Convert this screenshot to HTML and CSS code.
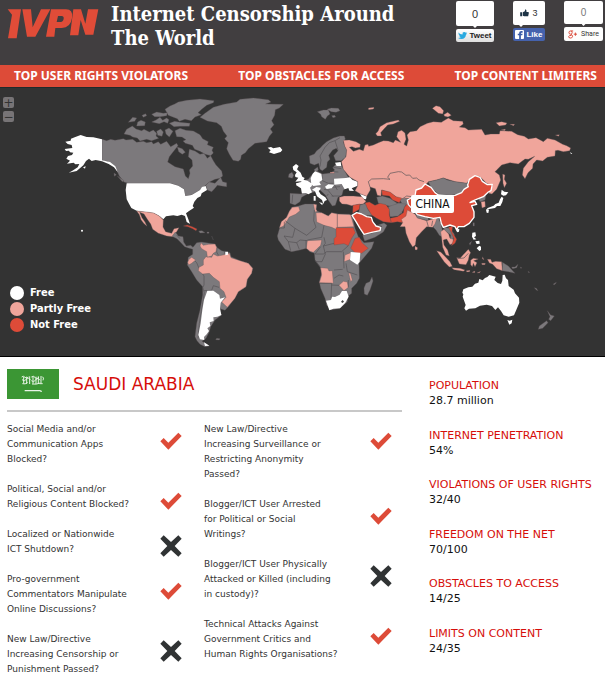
FILE: index.html
```html
<!DOCTYPE html>
<html lang="en">
<head>
<meta charset="utf-8">
<title>Internet Censorship Around The World</title>
<link rel="stylesheet" href="styles.css">
</head>
<body>
<header class="header">
  <a class="logo" href="#" aria-label="IVPN">
    <svg viewBox="0 0 276 96" aria-hidden="true">
      <path d="M2 4H42L29 91H3L15 20Z"/>
      <path d="M46 4H72L77 58L102 4H130L85 86H60Z"/>
      <path fill-rule="evenodd" d="M132 4H177Q199 4 195 30Q191 59 164 60H145L142 86H117ZM153 24L149 42H161Q169 41 170 32Q171 24 164 24Z"/>
      <path d="M199 4H222L235 47L243 4H274L259 80H235L221 36L214 82H189Z"/>
    </svg>
  </a>
  <h1 class="title">Internet Censorship Around The World</h1>
  <div class="social">
    <div class="share">
      <span class="count">0</span>
      <button class="share-btn tweet"><svg viewBox="0 0 26 22" aria-hidden="true"><path fill="#2aa9e0" d="M1 2Q6 8 13 8Q12 1 18 1Q21 1 23 3L26 2L24 6L26 6L23 9Q22 21 10 21Q4 21 0 18Q5 18 8 16Q4 15 3 12H6Q1 10 2 6L4 7Q0 5 1 2Z"/></svg>Tweet</button>
    </div>
    <div class="share">
      <span class="count count-like"><svg viewBox="0 0 26 24" aria-hidden="true"><path fill="#1d3346" d="M0 10H6V22H0ZM8 10L14 7L15 1Q20 1 19 9H25L26 12L24 22H12L8 20Z"/></svg>3</span>
      <button class="share-btn like"><svg viewBox="0 0 26 26" aria-hidden="true"><rect width="26" height="26" rx="3" fill="#fff"/><path fill="#3b5ca8" d="M12 26V15H8V11H12V8Q12 3 18 3H22V8H19Q17 8 17 10V11H22L21 15H17V26Z"/></svg>Like</button>
    </div>
    <div class="share">
      <span class="count count-plus">0</span>
      <button class="share-btn plus"><svg viewBox="0 0 28 26" aria-hidden="true"><g fill="none" stroke="#db4a39" stroke-width="3"><circle cx="8" cy="7" r="5"/><path d="M9 2H16M10 12Q15 16 14 20Q12 25 7 24Q1 23 2 19Q4 15 11 16M18 12H28M23 7V17"/></g></svg>Share</button>
    </div>
  </div>
</header>
<nav class="nav">
  <a href="#">TOP USER RIGHTS VIOLATORS</a>
  <a href="#">TOP OBSTACLES FOR ACCESS</a>
  <a href="#">TOP CONTENT LIMITERS</a>
</nav>
<section class="map">
  <svg class="world" viewBox="0 264 1815 804" role="img" aria-label="World map of internet freedom">
    <!-- North America -->
    <g class="grey" transform="translate(0 270)">
      <path d="M306 148L320 152 332 148 345 151 370 146 378 150 398 148 410 157 430 154 440 158 455 155 460 162 475 155 482 163 500 154 512 170 530 160 534 167 522 182 508 200 503 216 525 230 550 237 556 258 565 266 570 250 568 240 578 228 576 210 565 200 568 178 585 183 600 193 612 190 622 205 632 197 640 212 648 225 665 243 668 258 660 265 645 268 630 275 620 283 612 290 600 300 575 315 556 318 552 298 535 287 510 280 385 280 372 276 358 258 352 245 340 226 322 214 306 212Z"/>
      <path d="M617 286L628 276 645 280 662 262 668 275 680 278 680 290 665 288 652 286 645 295 635 305 622 300Z"/>
      <path d="M380 118L397 108 408 117 425 122 432 118 448 126 460 120 470 130 468 138 476 145 455 152 440 148 420 153 412 144 398 141 390 136 372 132ZM385 97L398 82 410 84 404 94ZM410 108L413 96 423 91 436 96 434 107ZM426 76L437 71 440 77 430 82ZM455 73L470 66 490 70 502 68 500 77 480 80 464 80ZM455 96L468 90 480 82 488 91 500 84 507 89 503 100 492 95 478 101ZM508 100L524 94 540 97 570 100 568 109 540 109 522 110ZM495 120L507 114 519 124 508 141 498 132ZM470 124L482 117 490 126 486 139 473 136ZM525 122L540 115 558 121 580 123 600 134 608 146 625 155 622 164 640 172 636 181 640 189 632 197 616 193 600 184 584 178 577 166 556 160 549 153 558 149 546 141 530 140ZM495 58L510 48 524 42 535 36 560 31 600 27 642 32 640 38 620 46 605 58 594 68 604 74 585 81 574 92 555 88 538 94 532 86 516 80 505 76ZM532 171L547 176 556 187 547 193 536 185ZM342 249L349 254 343 259ZM352 258L372 272 367 275Z"/>
      <path d="M600 82L615 70 640 52 672 43 710 36 720 28 760 24 805 29 813 36 797 42 850 43 838 54 826 59 824 76 815 92 822 104 811 117 818 127 808 139 800 155 765 160 745 176 736 188 724 196 722 208 715 214 699 211 688 193 680 176 685 158 674 146 681 138 670 124 664 109 650 98 622 93Z"/>
    </g>
    <g class="white" transform="translate(0 270)">
      <path d="M306 148L280 142 260 141 242 135 224 142 213 146 212 152 196 155 203 162 215 165 217 174 194 177 198 183 207 182 210 187 220 188 216 195 204 198 199 206 210 212 201 221 221 218 226 223 238 222 233 232 216 243 206 248 230 243 250 226 258 213 267 206 275 213 287 210 306 214 326 222 342 232 353 246 346 229 330 216 306 211ZM249 232L257 229 255 236ZM380 280H510L535 287 552 298 556 318 575 315 600 300 606 291 617 288 621 300 605 310 602 319 592 324 583 335 578 348 582 353 566 364 558 370 565 388 570 402 560 396 555 378 545 374 532 378 520 376 498 379 490 388 478 378 461 369 435 366 410 362 394 354 387 341 380 328 377 300Z"/>
      <circle cx="246" cy="422" r="3"/>
    </g>
    <g class="pink" transform="translate(0 270)">
      <path d="M410 363L440 366 461 369 478 378 490 390 489 411 497 425 515 430 522 416 537 413 530 425 518 440 500 438 475 430 458 418 452 402 442 388 432 372 419 367 426 383 435 396 441 409 431 400 423 389 418 374Z"/>
    </g>
    <!-- Central and South America -->
    <g class="grey" transform="translate(0 660)">
      <path d="M516 49L526 36 535 48 549 50 551 66 559 78 572 76 579 82 590 68 604 66 645 72 650 82 665 92 690 98 693 110 720 122 745 130 758 145 755 160 742 178 738 200 715 215 700 240 685 260 675 271 660 266 660 275 665 285 645 300 632 320 628 335 618 355 606 364 620 372 628 378 615 380 600 373 591 362 585 350 590 310 600 270 608 225 608 200 590 180 575 155 562 135 565 112 578 103 578 88 565 84 554 80 540 65 531 56ZM596 33L606 32 615 38 600 39ZM621 36H627V40H621ZM647 359L650 355 660 356 658 360Z"/>
      <path class="border" d="M582 120L590 128 597 145M608 162L612 168 612 195 608 203 613 218 606 260 598 310 594 355M622 112L612 122M651 84L650 96 656 107M675 92L672 105M612 212L635 211 640 197 657 202M635 48L640 60M530 45L540 56"/>
    </g>
    <g class="pink" transform="translate(0 660)">
      <path d="M603 68L610 76 625 73 645 72 650 82 648 95 640 100 635 108 622 112 620 95 605 86 600 78ZM610 120L618 110 635 112 640 102 652 108 665 106 688 100 693 113 720 122 745 130 758 145 755 160 742 178 738 200 715 215 705 235 682 262 665 246 678 232 672 215 660 205 658 185 640 172 628 160 608 162 595 152 597 142 610 135ZM567 118L575 112 587 120 575 130 566 135 563 127Z"/>
    </g>
    <path class="red" transform="translate(0 660)" d="M550 18L562 15 577 20 591 27 588 32 578 26 564 20Z"/>
    <g class="white" transform="translate(0 660)">
      <path d="M676 95L684 95 684 104 676 106ZM622 212L640 212 658 225 660 236 675 232 662 248 660 265 664 285 652 290 640 292 641 303 629 307 631 318 622 325 627 333 620 343 612 351 613 360 600 358 595 345 602 310 607 270 612 240ZM612 367L628 377 615 378Z"/>
    </g>
    <!-- Europe -->
    <g class="grey" transform="translate(660 270)">
      <path d="M292 65L310 60 325 60 330 72 322 78 316 88 305 80 302 73ZM321 58L334 54 355 55 360 62 348 67 334 65ZM335 77L344 76 347 81 339 83ZM268 198L283 192 290 182 300 175 308 166 320 155 340 144 360 138 373 138 376 147 370 155 374 168 380 180 377 202 364 212 347 212 341 197 354 182 349 175 338 180 326 196 330 208 322 216 320 232 307 242 300 238 296 220 283 225 270 220ZM205 262L207 252 216 247 221 256 217 265ZM282 239L293 231 295 240 287 247Z"/>
      <path d="M210 310L245 312 244 295 228 285 240 275 265 268 275 255 290 243 308 252 335 248 344 240 338 233 348 222 365 228 384 260 410 275 370 300 366 315 354 322 346 346 337 348 326 332 316 315 300 300 285 305 262 312 245 322 240 335 225 345 210 340Z"/>
      <path class="border" d="M300 230L303 210 300 198 315 172 328 158 345 152 354 180M345 152L360 143M306 252L307 272 325 280 340 280M312 298L325 300 335 292 360 290M325 302L340 320M335 318L360 318M340 232L364 236M336 245L355 246M218 314L216 340M343 284L352 300M325 312L320 318"/>
    </g>
    <g class="white" transform="translate(660 270)">
      <path d="M143 173L153 171 160 175 180 171 187 180 182 186 162 192 147 187 152 181ZM218 230L228 222 236 228 231 238 242 248 247 260 254 264 249 273 226 275 235 263 226 261 225 255 230 247 220 240ZM228 280L242 277 250 269 262 272 274 280 276 287 270 293 276 307 265 313 258 309 246 310 243 295 229 286ZM272 265L278 251 285 244 296 248 304 252 307 270 298 276 303 285 280 288 274 283ZM276 299L289 291 302 293 301 298 296 303 302 313 316 322 321 330 314 333 310 342 306 330 291 319 285 304ZM297 337L308 339 307 346ZM281 318H287V332H281ZM315 290L325 283 343 284 335 295 320 297ZM345 218L362 216 364 228 350 228ZM342 266L378 264 390 262 397 270 413 275 413 287 395 295 402 303 388 302 385 294 374 298 365 282 343 284ZM420 311L440 319 438 328 428 326Z"/>
    </g>
    <!-- Russia, Kazakhstan, Turkey -->
    <g class="pink" transform="translate(660 270)">
      <path d="M370 151L388 150 408 155 421 163 420 172 406 174 396 170 388 172 400 184 418 178 430 182 435 165 444 163 446 169 460 165 475 158 490 152 505 153 520 158 526 150 542 157 530 140 534 125 545 121 555 129 558 148 552 163 560 168 565 150 561 135 570 125 590 122 600 110 622 100 640 95 664 97 675 90 685 84 700 92 728 94 730 102 718 111 735 113 745 120 785 118 795 135 812 132 838 132 840 122 875 124 893 134 913 139 925 147 948 143 965 152 970 155 982 145 1005 150 1028 163 1040 167 1052 174 1049 182 1030 185 1014 181 1006 182 1005 198 982 202 968 213 950 210 939 222 938 235 924 248 915 266 907 255 910 235 925 215 944 199 925 208 915 207 895 222 870 218 845 225 825 245 838 255 842 270 830 298 816 312 806 310 818 285 801 281 780 260 765 257 748 270 740 280 705 275 670 264 650 270 625 275 612 290 600 318 570 325 545 328 530 322 510 308 485 300 483 318 472 316 466 296 450 291 451 300 440 319 420 311 405 302 413 287 413 275 390 262 384 255 370 238 364 215 378 200 380 180 374 168ZM330 247L343 246 343 250 330 250ZM358 322L372 318 400 318 425 320 438 334 430 342 410 344 395 347 380 343 366 342 358 333Z"/>
      <path d="M467 131L474 124 480 110 500 98 535 90 539 94 520 102 503 105 491 118 482 128 485 138 472 138ZM445 54L462 52 461 57 446 59ZM637 55L648 47 660 50 671 62 668 72 655 70ZM671 74L683 67 694 76 684 81 674 79ZM828 98L845 95 861 99 857 105 838 108ZM869 103L884 103 881 107ZM843 120L856 117 855 122ZM1006 135L1018 134 1016 139ZM848 252L855 255 853 268 860 280 853 293 849 280Z"/>
      <path class="border" d="M612 275L597 270 590 264 578 265 569 255 558 256 545 246 535 245 510 250 503 262 510 268 490 266 455 267 445 275 450 291M545 328L560 318 590 322"/>
    </g>
    <g class="grey" transform="translate(660 270)">
      <path d="M470 322L487 318 510 325 532 340 520 350 490 345 475 340ZM505 350L520 350 532 340 545 338 536 328 560 325 568 340 548 352 546 370 515 380Z"/>
    </g>
    <!-- Africa -->
    <g class="grey" transform="translate(780 600)">
      <path d="M95 22L115 18 135 12 160 12 170 14 168 32 185 38 205 48 215 38 235 42 268 42 278 55 285 85 295 110 312 128 342 125 335 145 310 175 297 190 298 235 290 250 275 265 275 280 262 290 262 305 240 325 212 330 200 315 195 295 182 265 178 245 185 220 180 200 165 180 163 160 150 155 140 145 120 150 95 155 75 148 55 120 52 108 60 80 75 60 88 35ZM312 264L318 250 329 245 336 231 339 243 330 270 322 286 313 282ZM300 15L318 10 324 28 338 46 318 47 296 38ZM385 20L415 10 438 12 430 30 415 48 390 50ZM308 106L335 100 360 92 365 78 352 76 372 69 381 76 370 96 345 112 314 123Z"/>
    </g>
    <g class="pink" transform="translate(780 600)">
      <path d="M97 22L116 20 120 32 107 43 88 51 72 77 58 84 64 65 80 52 88 34ZM160 12L170 14 168 28 172 34 165 36ZM168 38L185 38 205 48 215 38 232 42V90L215 82 192 76 170 66ZM232 42L272 44 282 80 232 82ZM142 122L185 120 182 136 160 157 150 154 139 145ZM255 165L272 158 272 178 252 185ZM182 203L203 205 207 213 217 212 220 250 178 248 185 225ZM237 256L250 244 262 246 265 262 252 272ZM266 220L271 219 277 240 272 245Z"/>
    </g>
    <g class="red" transform="translate(780 600)">
      <path d="M228 83L280 83 286 98 275 115 265 137 252 131 222 135V116L228 110ZM285 115L298 112 306 128 325 145 305 160 285 158 272 145ZM279 16L300 12 298 28 278 40ZM315 8L328 6 345 16 360 10 378 14 388 28 388 45 394 68 370 65 350 55 335 45 322 25ZM390 55L412 50 430 38 433 22 442 12 452 24 455 38 438 52 430 68 412 65 394 68ZM365 -30L390 -24 408 -10 425 -6 418 8 398 0 388 -12 367 -14Z"/>
    </g>
    <g class="white" transform="translate(780 600)">
      <path d="M272 156L301 158 299 185 292 194 270 180ZM198 302L213 300 216 290 225 291 239 284 246 273 260 273 266 290 256 308 240 325 220 326 208 331Z"/>
      <path fill="#444" d="M243 305L248 300 252 305 247 309Z"/>
    </g>
    <g transform="translate(780 600)">
      <path class="border" d="M75 62L105 85 140 106 168 82 161 62 163 30M58 84H73V65M105 85L98 112 72 108M192 76L185 112 142 120M142 122L120 120 110 128 85 125 72 108M85 125L92 152M110 128L118 148M138 120V145M192 112L196 130 190 138 222 130M182 140L165 162 190 162 200 155 245 155M190 138L196 162 186 185 168 185M245 155L265 137M250 155L252 205M182 203L165 182M222 210L248 208M222 235L237 225 250 228M180 250H215L213 295M215 255L237 256M258 190L262 215 292 225M265 262V240"/>
      <path class="selected" d="M276 46L290 38 305 42 320 50 334 52 338 65 348 78 362 82 360 92 335 97 312 103 300 85 288 65Z"/>
    </g>
    <!-- Asia and Oceania -->
    <g class="grey" transform="translate(1200 600)">
      <path d="M85 -54L110 -60 130 -66 142 -60 165 -55 200 -50 212 -42 200 -32 180 -18 150 -14 115 -18 95 -35ZM235 -5L258 -16 255 0 240 5ZM48 42L85 52 85 62 50 54ZM98 62L115 53 123 72 128 95 128 112 118 106 108 90 100 82ZM130 82L150 85 163 103 160 120 150 120 152 105 135 92ZM219 68H223V78H219ZM208 130L215 124 210 136ZM307 187L325 198 345 220 325 215 307 212ZM335 201L345 201 354 193 350 203 338 206ZM442 332L452 345 463 348 452 362 446 358 450 350ZM440 362L444 368 428 385 415 388 418 378ZM403 263L409 265 414 272 409 270ZM460 252L469 247 468 250 462 255ZM361 201L366 204 362 205ZM384 214L389 217 386 218Z"/>
    </g>
    <g class="pink" transform="translate(1200 600)">
      <path d="M0 80L8 68 4 58 18 48 22 30 45 42 52 54 80 62 98 57 112 52 105 72 98 82 80 80 65 95 49 113 46 135 38 141 28 125 18 100 15 80ZM45 138L53 143 51 150 45 149ZM122 95L132 88 146 102 150 115 160 118 160 130 150 134 140 117 130 120 132 135 143 150 148 168 138 165 128 142 125 115ZM110 152L122 156 134 168 150 185 157 199 148 201 133 186 123 172ZM155 203L180 205 195 210 190 214 162 209ZM170 173L181 174 188 166 205 148 212 158 208 166 205 180 198 194 178 192ZM212 181L220 175 235 177 221 182 231 188 225 200 220 190 217 200 212 194ZM248 170L252 180 247 176ZM245 190L256 190 255 194 246 194ZM262 178L272 178 276 187 287 184 305 185 307 212 290 206 278 193 268 189ZM199 212L210 211 209 215 200 216ZM216 217L225 213 224 218ZM231 219L242 214 238 219ZM243 5L255 4 256 20 246 24Z"/>
      <path class="border" d="M80 62L85 80M172 176L192 174 205 160M98 62L95 78"/>
    </g>
    <path class="red" transform="translate(1200 600)" d="M145 82L158 78 156 95 170 118 165 130 154 137 162 116 154 98Z"/>
    <path class="selected" transform="translate(1200 600)" d="M22 0L45 -12 48 -30 65 -36 75 -48 93 -38 105 -22 115 -15 150 -12 165 -14 185 -22 192 -32 205 -40 203 -45 208 -62 225 -73 240 -68 247 -56 262 -46 277 -47 273 -28 265 -24 250 -10 235 -4 217 3 210 8 225 4 230 13 215 17 222 35 222 52 208 70 192 80 175 80 170 90 165 80 150 75 130 82 124 70 120 52 100 55 75 50 52 44 40 30 25 14Z"/>
    <g class="white" transform="translate(1200 600)">
      <path d="M168 88L178 87 177 95 171 97ZM305 -31L313 -25 325 -23 318 -14 310 -13 303 -17ZM305 -10L310 -6 307 6 301 18 291 18 285 24 268 27 258 30 263 24 281 17 286 12 296 8 300 -2ZM258 29L267 29 265 39 260 38ZM217 98L226 97 228 108 222 112 229 118 221 119 216 110ZM226 124L238 122 239 131 230 132ZM230 145L238 137 243 140 243 150 238 153ZM190 268L205 262 217 260 225 251 235 248 238 237 248 241 255 234 262 231 268 225 287 230 283 240 293 249 303 252 307 242 308 225 314 224 318 235 324 240 326 258 341 269 345 280 357 293 358 308 351 325 342 346 326 350 311 346 303 333 294 322 286 330 276 318 260 314 240 317 226 325 207 326 198 332 193 325 197 315 188 290 190 283 187 278ZM322 360L329 362 337 359 335 370 328 374ZM510 -144L517 -139 513 -138Z"/>
    </g>
  </svg>
  <div class="zoom">
    <button aria-label="Zoom in">+</button>
    <button aria-label="Zoom out">−</button>
  </div>
  <span class="tooltip">CHINA</span>
  <ul class="legend">
    <li><i class="dot dot-free"></i>Free</li>
    <li><i class="dot dot-partly"></i>Partly Free</li>
    <li><i class="dot dot-not"></i>Not Free</li>
  </ul>
</section>
<svg class="symbols" aria-hidden="true">
  <symbol id="check" viewBox="0 0 66 66"><path fill="#dd4b38" d="M1 34L11 24 25 38 55 8 65 18 25 59Z"/></symbol>
  <symbol id="cross" viewBox="0 0 66 66"><path fill="#303334" d="M11 1L33 21 55 1 65 11 44 33 65 55 55 65 33 45 11 65 1 55 22 33 1 11Z"/></symbol>
</svg>
<main class="detail">
  <section class="country">
    <div class="country-head">
      <svg class="flag" viewBox="0 0 156 90" role="img" aria-label="Flag of Saudi Arabia">
        <rect width="156" height="90" fill="#3b9634"/>
        <g fill="none" stroke="#e8f4e6" stroke-width="3"><path d="M44 24Q49 19 54 25T64 24M45 32Q52 39 58 31T70 33M46 44Q55 47 62 40M50 24V43M59 23V45M68 22V45M73 24Q80 19 85 26T96 24M73 35Q80 42 86 33T99 34M75 45Q88 47 100 42M78 22V44M87 23V45M94 22V44M102 21V42M106 23Q112 26 108 34M107 44H98"/><path stroke-width="4" d="M53 65H98Q103 65 103 69"/></g>
      </svg>
      <h2>SAUDI ARABIA</h2>
    </div>
    <div class="questions">
      <ul>
        <li><span>Social Media and/or Communication Apps Blocked?</span><svg role="img" aria-label="Yes"><use href="#check"/></svg></li>
        <li><span>Political, Social and/or Religious Content Blocked?</span><svg role="img" aria-label="Yes"><use href="#check"/></svg></li>
        <li><span>Localized or Nationwide<br>ICT Shutdown?</span><svg role="img" aria-label="No"><use href="#cross"/></svg></li>
        <li><span>Pro-government Commentators Manipulate Online Discussions?</span><svg role="img" aria-label="Yes"><use href="#check"/></svg></li>
        <li><span>New Law/Directive<br>Increasing Censorship or<br>Punishment Passed?</span><svg role="img" aria-label="No"><use href="#cross"/></svg></li>
      </ul>
      <ul>
        <li><span>New Law/Directive<br>Increasing Surveillance or<br>Restricting Anonymity<br>Passed?</span><svg role="img" aria-label="Yes"><use href="#check"/></svg></li>
        <li><span>Blogger/ICT User Arrested<br>for Political or Social<br>Writings?</span><svg role="img" aria-label="Yes"><use href="#check"/></svg></li>
        <li><span>Blogger/ICT User Physically Attacked or Killed (including in custody)?</span><svg role="img" aria-label="No"><use href="#cross"/></svg></li>
        <li><span>Technical Attacks Against Government Critics and Human Rights Organisations?</span><svg role="img" aria-label="Yes"><use href="#check"/></svg></li>
      </ul>
    </div>
  </section>
  <dl class="stats">
    <div><dt>POPULATION</dt><dd>28.7 million</dd></div>
    <div><dt>INTERNET PENETRATION</dt><dd>54%</dd></div>
    <div><dt>VIOLATIONS OF USER RIGHTS</dt><dd>32/40</dd></div>
    <div><dt>FREEDOM ON THE NET</dt><dd>70/100</dd></div>
    <div><dt>OBSTACLES TO ACCESS</dt><dd>14/25</dd></div>
    <div><dt>LIMITS ON CONTENT</dt><dd>24/35</dd></div>
  </dl>
</main>
</body>
</html>
```
FILE: styles.css
```css
* { box-sizing: border-box; margin: 0; padding: 0; }
body { background: #fff; color: #333; font-family: Verdana, "DejaVu Sans", sans-serif; }
ul { list-style: none; }
a { text-decoration: none; color: inherit; }
button { font: inherit; border: 0; cursor: pointer; }

.header { display: flex; align-items: flex-start; height: 65px; padding: 0 2px 0 7px; background: #413e40; }
.logo { width: 92px; margin-top: 8px; }
.logo svg { display: block; width: 100%; fill: #e04c38; }
.title { flex: 1; max-width: 310px; margin: 2px 0 0 12px; color: #fff; font: bold 20px/24px "DejaVu Serif Condensed", "DejaVu Serif", serif; }
.social { display: flex; gap: 19px; margin: 1px 0 0 auto; }
.share { display: flex; flex-direction: column; gap: 3px; }
.count { position: relative; display: flex; align-items: center; justify-content: center; gap: 3px; height: 25px; border-radius: 2px; background: #fff; color: #333; font: 11px/12px "Liberation Sans", sans-serif; }
.count::after { content: ""; position: absolute; top: 100%; left: 50%; width: 4px; height: 2px; margin-left: -2px; background: #fff; clip-path: polygon(0 0, 100% 0, 50% 100%); }
.count svg { width: 9px; height: 8px; }
.count-like { font-size: 9px; height: 24px; }
.count-like::after { left: 25%; }
.count-plus { height: 23px; color: #777; font-size: 10px; }
.share-btn { display: flex; align-items: center; justify-content: center; gap: 2px; height: 13px; border-radius: 2px; white-space: nowrap; }
.share-btn svg { width: 9px; height: 9px; flex: none; }
.tweet { width: 38px; background: linear-gradient(#fff, #dedede); color: #222; font: bold 8px/12px "Liberation Sans", sans-serif; }
.like { width: 32px; background: #4562ad; color: #fff; font: bold 8px/12px "Liberation Sans", sans-serif; }
.plus { width: 39px; height: 14px; background: #fdfdfd; color: #333; font: 7px/12px Roboto, sans-serif; gap: 4px; }

.nav { display: flex; justify-content: space-between; align-items: center; height: 23px; padding: 0 8px 0 14px; background: #dd4b38; border-bottom: 1px solid #222a2b; color: #fff; font: bold 12px/22px "Noto Sans", sans-serif; }

.map { position: relative; background: #333; border-bottom: 1px solid #000; }
.world { display: block; width: 100%; }
.world path { stroke-linejoin: round; }
.grey { fill: #7c797c; }
.pink { fill: #f0a59b; }
.red { fill: #dd4b38; }
.white { fill: #fff; }
.grey, .pink, .red { stroke: #5a5356; stroke-width: 1px; }
.border { fill: none; stroke: #555154; stroke-width: 2px; }
.selected { fill: #dd4b38; stroke: #fff; stroke-width: 4px; }
.zoom { position: absolute; top: 9px; left: 3px; display: grid; gap: 3px; }
.zoom button { width: 11px; height: 11px; border-radius: 2px; background: #777476; color: #333; font: 12px/10px "DejaVu Sans", sans-serif; }
.tooltip { position: absolute; top: 40%; left: 68%; padding: 1px 4px; border-radius: 2px; background: #fff; color: #111; font: 12px/16px "DejaVu Sans Condensed", "DejaVu Sans", sans-serif; }
.legend { position: absolute; left: 10px; bottom: 23px; color: #fff; font: bold 11px/16px "DejaVu Sans Condensed", "DejaVu Sans", sans-serif; }
.legend li { display: flex; align-items: center; gap: 6px; }
.dot { width: 14px; height: 14px; border-radius: 50%; }
.dot-free { background: #fff; }
.dot-partly { background: #f0a59b; }
.dot-not { background: #dd4b38; }

.symbols { display: none; }
.detail { display: flex; gap: 27px; padding: 12px 4px 0 7px; }
.country { flex: 1; }
.country-head { display: flex; align-items: center; gap: 14px; padding-bottom: 11px; border-bottom: 2px solid #c8c8c8; }
.flag { width: 52px; height: 30px; }
.country h2 { color: #d60e0a; font-size: 17px; line-height: 24px; font-weight: normal; }
.questions { display: grid; grid-template-columns: 197fr 198fr; padding-top: 10px; font-size: 9px; line-height: 15px; }
.questions ul { display: grid; gap: 15px; align-content: start; }
.questions li { display: flex; align-items: flex-start; justify-content: space-between; }
.questions span { width: 137px; }
.questions svg { width: 22px; height: 22px; margin: 8px 22px 0 0; flex: none; }
.questions ul + ul svg { margin-right: 10px; }
.stats { display: flex; flex-direction: column; justify-content: space-between; width: 172px; padding: 9px 0 21px; font-size: 11px; line-height: 15px; white-space: nowrap; }
.stats dt { color: #d60e0a; }
.stats dd { color: #111; }
```
